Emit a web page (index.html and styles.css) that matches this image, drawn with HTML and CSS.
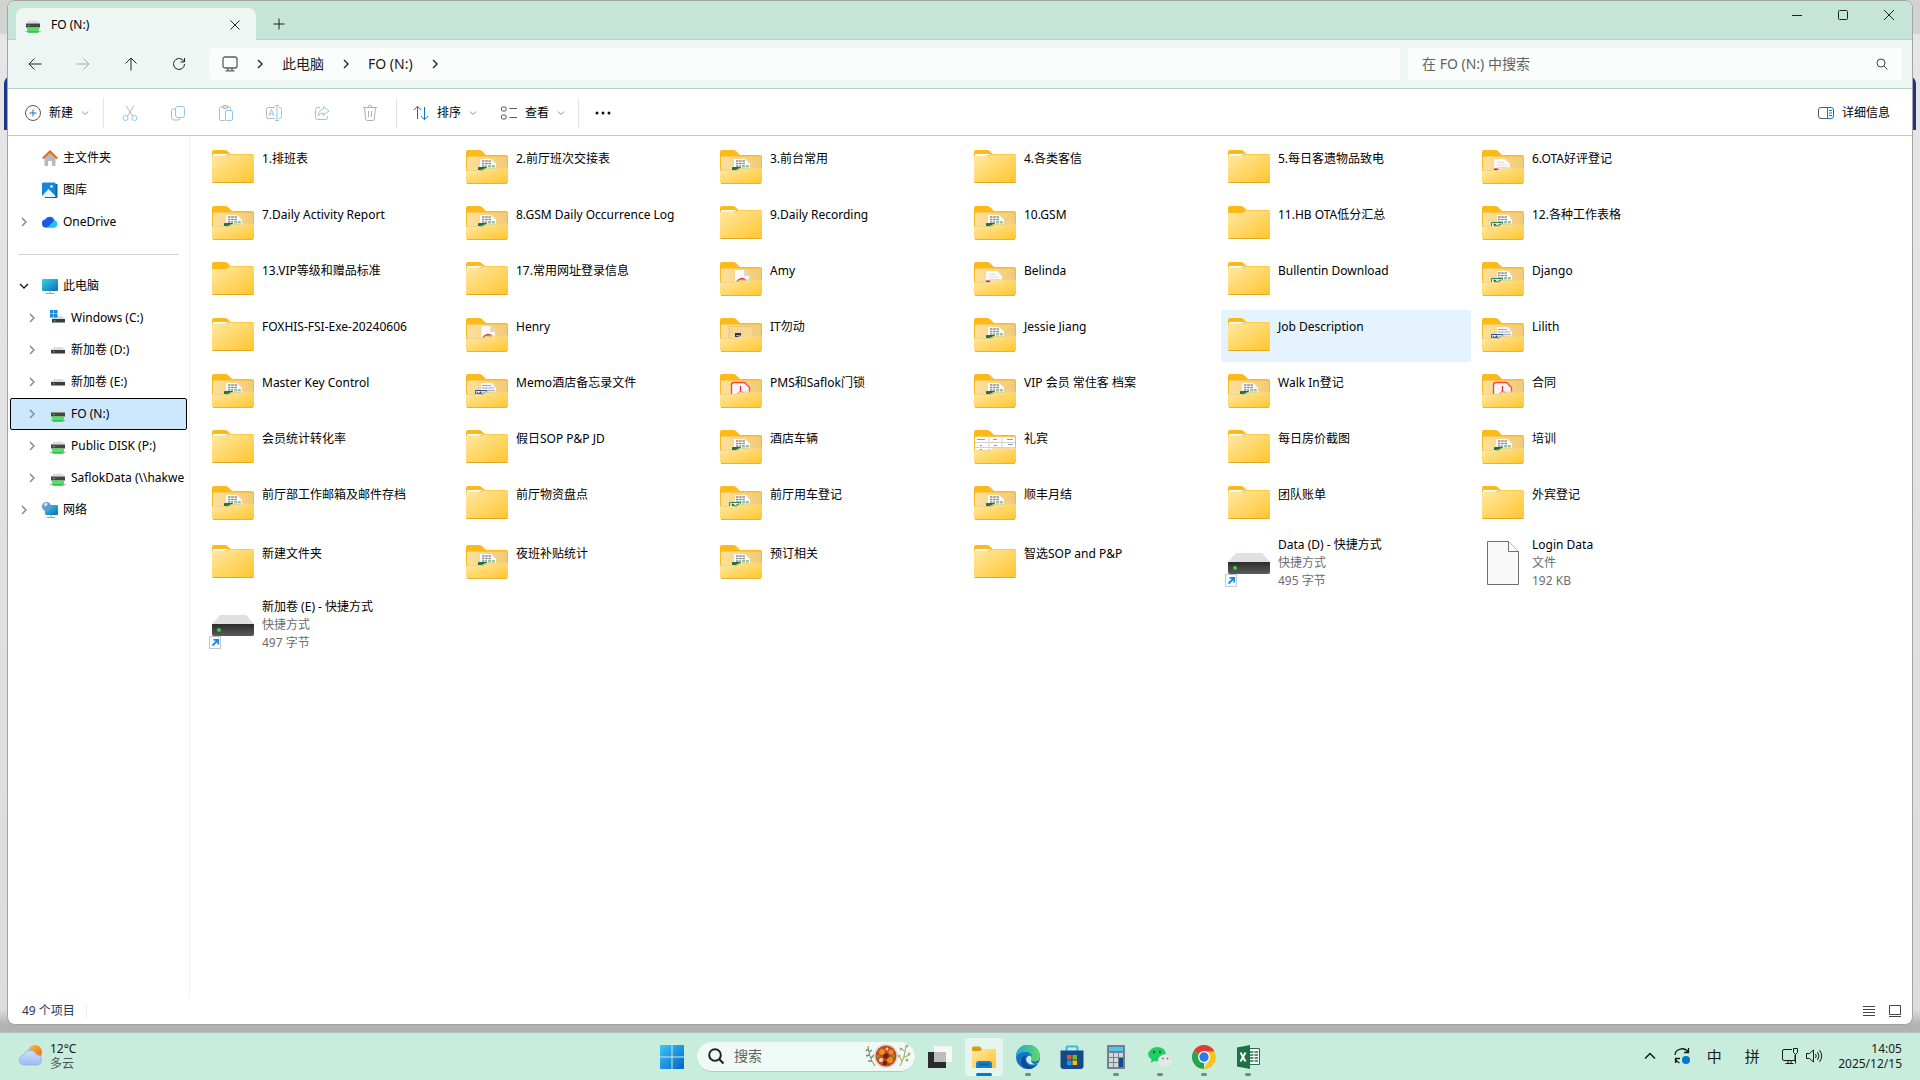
FILE: index.html
```
<!DOCTYPE html>
<html lang="zh-CN">
<head>
  <meta charset="UTF-8">
  <meta name="viewport" content="width=device-width, initial-scale=1.0">
  <title>FO (N:)</title>
  <link rel="stylesheet" href="styles.css">
</head>
<body>
  <!-- shared icons -->
  <svg class="defs" width="0" height="0" aria-hidden="true">
    <defs>
      <linearGradient id="gFolder" x1="0" y1="0" x2="1" y2="1">
        <stop offset="0" stop-color="#ffe9a4"/><stop offset="1" stop-color="#ffc52c"/>
      </linearGradient>
      <linearGradient id="gInside" x1="0" y1="0" x2="1" y2="0">
        <stop offset="0" stop-color="#fde09a"/><stop offset="1" stop-color="#f1ca78"/>
      </linearGradient>
      <linearGradient id="gDrive" x1="0" y1="0" x2="0" y2="1">
        <stop offset="0" stop-color="#2c2c2c"/><stop offset="1" stop-color="#5c5c5c"/>
      </linearGradient>
      <linearGradient id="gBlue" x1="0" y1="0" x2="1" y2="1">
        <stop offset="0" stop-color="#3fc4f6"/><stop offset="1" stop-color="#0067c5"/>
      </linearGradient>
      <linearGradient id="gScreen" x1="0" y1="0" x2="1" y2="1">
        <stop offset="0" stop-color="#35d6e4"/><stop offset="1" stop-color="#1268b8"/>
      </linearGradient>
      <linearGradient id="gEdge" x1="0" y1="0" x2="1" y2="0">
        <stop offset="0" stop-color="#1fa7e0"/><stop offset="1" stop-color="#5fdc5a"/>
      </linearGradient>
      <linearGradient id="gSun" x1="0" y1="0" x2="1" y2="1">
        <stop offset="0" stop-color="#f9c23c"/><stop offset="1" stop-color="#f0640a"/>
      </linearGradient>
      <linearGradient id="gCloud" x1="0" y1="0" x2="0" y2="1">
        <stop offset="0" stop-color="#cfe0fb"/><stop offset="1" stop-color="#9dbaf0"/>
      </linearGradient>
    </defs>

    <symbol id="folder" viewBox="0 0 48 48">
      <path d="M3 8q0-2 2-2h11q1.500 0 2.500 1l3 3H43q2 0 2 2v6H3z" fill="#fbb91a"/>
      <path d="M4 12V10h14l2 1z" fill="#fff"/>
      <path d="M3 12h14q1.500 0 2.500-.8T22 10.500H43.500Q45 10.500 45 12V37q0 2-2 2H5q-2 0-2-2z" fill="url(#gFolder)"/>
      <path d="M3.500 38.500h41" stroke="#e6a823"/>
      <path d="M5 11.500h11.500" stroke="#eef1f8"/>
    </symbol>
    <symbol id="folder-empty" viewBox="0 0 48 48">
      <path d="M3 8q0-2 2-2h11q1.500 0 2.500 1l3 3H43q2 0 2 2v6H3z" fill="#fbb91a"/>
      <path d="M3 13h13q1.500 0 2.500-1T22 10.500H43.500Q45 10.500 45 12V37q0 2-2 2H5q-2 0-2-2z" fill="url(#gFolder)"/>
      <path d="M3.500 38.500h41" stroke="#e6a823"/>
    </symbol>
    <symbol id="back" viewBox="0 0 48 48">
      <path d="M3 8q0-2 2-2h11q2 0 3 1l4 4H43q2 0 2 2v24H3z" fill="#fbb91a"/>
      <path d="M4 14q0-1.500 1.500-1.500H43q1 0 1 1V36H4z" fill="url(#gInside)"/>
    </symbol>
    <symbol id="front" viewBox="0 0 48 48">
      <path d="M3 27h14q2 0 3.500-1T24 24.500H45V37.500q0 2-2 2H5q-2 0-2-2z" fill="url(#gFolder)"/>
      <path d="M3 26.500h14q2 0 3.500-1T24 24H45" stroke="#f0d48a" fill="none"/>
      <path d="M4 39.500h40" stroke="#e9b23b"/>
    </symbol>
    <symbol id="excel" viewBox="0 0 48 48">
      <path d="M17 15h11l5 5v8H17z" fill="#fff"/>
      <path d="M19 17h9M19 19.500h9M19 22h5" stroke="#8a8a8a" stroke-width="1.500" stroke-dasharray="2.500 .7"/>
      <path d="M25 22h7M25 24.500h7" stroke="#8cc6a4" stroke-width="2" stroke-dasharray="3 .8"/>
      <path d="M15 24q0-1 1-1h8v5h-9z" fill="#1e7145"/>
    </symbol>
    <symbol id="excel-old" viewBox="0 0 48 48">
      <path d="M18 15h11l4 5v8H18z" fill="#fff"/>
      <path d="M19 17h9M19 19.500h9M19 22h5" stroke="#8a8a8a" stroke-width="1.500" stroke-dasharray="2.500 .7"/>
      <path d="M25 22h7M25 24.500h7" stroke="#8cc6a4" stroke-width="2" stroke-dasharray="3 .8"/>
      <path d="M12.500 22.500h11v6h-11z" fill="#e6f5ec" stroke="#2c8557"/>
      <path d="M15 24l3 3 4-3" stroke="#1e7145" stroke-width="2" fill="none"/>
    </symbol>
    <symbol id="word" viewBox="0 0 48 48">
      <path d="M18 15h11l4 5v8H18z" fill="#f7f8fb"/>
      <path d="M19 17.500h9M19 20h12M24 22.500h8M24 25h8" stroke="#a5a9b2"/>
      <path d="M12.500 22.500h11v6h-11z" fill="#dce6f5" stroke="#2b579a"/>
      <path d="M14 24.500l1.500 2.500 2-2.500 2 2.500 2-2.500" stroke="#2b579a" stroke-width="1.500" fill="none"/>
    </symbol>
    <symbol id="pdf" viewBox="0 0 48 48">
      <path d="M18 14h9l5 6v8H18z" fill="#fafafa"/>
      <path d="M27 14l5 6h-5z" fill="#d8d8d8"/>
      <path d="M20 26.500q4-6 9-1.500" stroke="#e0302b" stroke-width="2.500" fill="none"/>
    </symbol>
    <symbol id="acrobat" viewBox="0 0 48 48">
      <path d="M14.500 28V17q0-2.500 2.500-2.500h10.500l5 5V28z" fill="#f6f4f4" stroke="#f0473e" stroke-width="1.300"/>
      <path d="M23.500 18v5.500l-3.500 3M23.500 23.500l4 1.500" stroke="#e5252a" stroke-width="1.200" fill="none"/>
    </symbol>
    <symbol id="report" viewBox="0 0 48 48">
      <path d="M15 15h11l5 5v8H15z" fill="#fafafa"/>
      <path d="M18 18.500h7M18 21h10M18 23.500h10" stroke="#dcdcdc"/>
      <path d="M15 24.500h5l-2.500 3H15z" fill="#d3141c"/>
    </symbol>
    <symbol id="picture" viewBox="0 0 48 48">
      <path d="M12 14.500h24v14H12z" fill="#f6d793" stroke="#edc679"/>
      <path d="M18 21h6v4h-6z" fill="#283468"/>
      <path d="M19 23.500h4" stroke="#8ea0d0"/>
    </symbol>
    <symbol id="sheet" viewBox="0 0 48 48">
      <path d="M4 13h40v14H4z" fill="#fff"/>
      <path d="M4 18.500h40M4 23.500h40M18 13v14M31 13v14" stroke="#cfd0d4"/>
      <path d="M6 15.500h8M22 15.500h4M36 15.500h6M9 21.500h2M23 21.500h3M37 20.500h5M9 25.500h2" stroke="#999ba3"/>
    </symbol>
    <symbol id="drive-big" viewBox="0 0 48 48">
      <path d="M11 14h26l8 9H3z" fill="#dfe0e4"/>
      <path d="M3 23h42v10q0 2-1.500 2h-39Q3 35 3 33z" fill="url(#gDrive)"/>
      <circle cx="10" cy="29" r="2" fill="#2fd53a"/>
      <path d="M.5 35.500h11v12H.5z" fill="#fff" stroke="#b9c7dc"/>
      <path d="M3.500 44.500l5-5M4.500 38.800h4.700v4.700" stroke="#1b87dc" stroke-width="1.800" fill="none"/>
    </symbol>
    <symbol id="file" viewBox="0 0 48 48">
      <path d="M8.500 2.500h21l10 10v33h-31z" fill="#f9f9f9" stroke="#6e6e6e"/>
      <path d="M29.500 2.500v10h10" fill="#fff" stroke="#6e6e6e"/>
    </symbol>

    <symbol id="drive" viewBox="0 0 16 16">
      <path d="M4 5h8l3 3H1z" fill="#dcdde1"/>
      <path d="M1 8h14v3.500H1z" fill="#3b3b3b"/>
      <path d="M3 9.800h1.500" stroke="#2fe23a"/>
    </symbol>
    <symbol id="netdrive" viewBox="0 0 16 16">
      <path d="M4 3.500h8l3 3H1z" fill="#dcdde1"/>
      <path d="M1 6.500h14v4H1z" fill="#454545"/>
      <path d="M3 8.500h1.500" stroke="#2fe23a"/>
      <path d="M2 10.500h12v5H2z" fill="#55e065"/>
      <path d="M3 15h10" stroke="#1fa03c"/>
      <path d="M0 14.500h2M14 14.500h2" stroke="#b9bcc0"/>
    </symbol>
    <symbol id="chev" viewBox="0 0 16 16"><path d="M6 4l4 4-4 4" fill="none" stroke="currentColor" stroke-width="1.500"/></symbol>
    <symbol id="down" viewBox="0 0 8 8"><path d="M1 2.500l3 3 3-3" fill="none" stroke="#8a8a8a"/></symbol>
  </svg>

  <main class="window">
    <header class="titlebar">
      <div class="tab">
        <svg class="i16"><use href="#netdrive"/></svg>
        <span class="tab-name">FO (N:)</span>
        <button class="icon-btn" aria-label="关闭标签页"><svg width="10" height="10" viewBox="0 0 10 10"><path d="M.5.5l9 9M9.500.5l-9 9"/></svg></button>
      </div>
      <button class="icon-btn new-tab" aria-label="新建标签页"><svg width="12" height="12" viewBox="0 0 12 12"><path d="M6 .5v11M.5 6h11"/></svg></button>
      <div class="caption">
        <button aria-label="最小化"><svg width="10" height="10" viewBox="0 0 10 10"><path d="M0 5.500h10"/></svg></button>
        <button aria-label="最大化"><svg width="10" height="10" viewBox="0 0 10 10"><rect x=".5" y=".5" width="9" height="9" rx="1"/></svg></button>
        <button aria-label="关闭"><svg width="10" height="10" viewBox="0 0 10 10"><path d="M0 0l10 10M10 0L0 10"/></svg></button>
      </div>
    </header>

    <div class="navbar">
      <div class="nav-buttons">
        <button class="icon-btn" aria-label="后退"><svg width="14" height="14" viewBox="0 0 14 14"><path d="M13.500 7H1M6.500 1.500L1 7l5.500 5.500"/></svg></button>
        <button class="icon-btn" aria-label="前进" disabled><svg width="14" height="14" viewBox="0 0 14 14"><path d="M.5 7H13M7.500 1.500L13 7l-5.500 5.500"/></svg></button>
        <button class="icon-btn" aria-label="向上"><svg width="14" height="14" viewBox="0 0 14 14"><path d="M7 13.500V1M1.500 6.500L7 1l5.500 5.500"/></svg></button>
        <button class="icon-btn" aria-label="刷新"><svg width="14" height="14" viewBox="0 0 14 14"><path d="M12.500 7A5.500 5.500 0 1 1 11 3.200L12.500 5M12.500 1v4h-4"/></svg></button>
      </div>
      <nav class="address">
        <svg width="16" height="16" viewBox="0 0 16 16"><g fill="none" stroke="#5c5c5c" stroke-width="1.300"><rect x="1" y="1" width="14" height="11" rx="2"/><path d="M6 12v2.500M10 12v2.500M3.500 14.800h9"/></g></svg>
        <svg class="i16"><use href="#chev"/></svg>
        <a href="#">此电脑</a>
        <svg class="i16"><use href="#chev"/></svg>
        <a href="#">FO (N:)</a>
        <svg class="i16"><use href="#chev"/></svg>
      </nav>
      <label class="search">
        <input type="text" placeholder="在 FO (N:) 中搜索" aria-label="搜索">
        <svg width="12" height="12" viewBox="0 0 12 12"><path d="M8 8l3.500 3.500" /><circle cx="5" cy="5" r="4"/></svg>
      </label>
    </div>

    <div class="commands">
      <button class="cmd new"><svg width="16" height="16" viewBox="0 0 16 16"><circle cx="8" cy="8" r="7.500" stroke="#5a5a5a"/><path d="M8 4.500v7M4.500 8h7" stroke="#0078d4"/></svg><span>新建</span><svg class="i8"><use href="#down"/></svg></button>
      <span class="sep"></span>
      <div class="tools">
        <button aria-label="剪切" disabled><svg width="16" height="16" viewBox="0 0 16 16"><path d="M4 .5l6.500 10.500M12 .5L5.500 11" stroke="#b8b8b8"/><circle cx="3.500" cy="13" r="2.500" stroke="#8fc7ee"/><circle cx="12.500" cy="13" r="2.500" stroke="#8fc7ee"/></svg></button>
        <button aria-label="复制" disabled><svg width="16" height="16" viewBox="0 0 16 16"><path d="M5.500 4H3Q1.500 4 1.500 5.500v7Q1.500 15 4 15h4q2 0 2-2" stroke="#b8b8b8"/><rect x="5.500" y="1.500" width="9" height="11" rx="2" stroke="#8fc7ee"/></svg></button>
        <button aria-label="粘贴" disabled><svg width="16" height="16" viewBox="0 0 16 16"><path d="M7 15.500H3q-1.500 0-1.500-1.500V3.500Q1.500 2 3 2h8q1.500 0 1.500 1.500V5M4.500 2q0-1.500 1.500-1.500h2.500q1.500 0 1.500 1.500t-1.500 1.500H6Q4.500 3.500 4.500 2" stroke="#b8b8b8"/><rect x="7.500" y="5.500" width="7" height="10" rx="1.500" stroke="#8fc7ee"/></svg></button>
        <button aria-label="重命名" disabled><svg width="16" height="16" viewBox="0 0 16 16"><path d="M9 2.500H2.500Q.5 2.500.5 4.500v7q0 2 2 2H9M13 2.500q2.500 0 2.500 2v7q0 2-2.500 2" stroke="#b8b8b8"/><path d="M3 11l2.500-6.500L8 11M4 9h3M11 .5v15M9 .5h4M9 15.500h4" stroke="#8fc7ee"/></svg></button>
        <button aria-label="共享" disabled><svg width="16" height="16" viewBox="0 0 16 16"><path d="M6 2.500H3.500Q1.500 2.500 1.500 4.500v8q0 2 2 2h8q2 0 2-2V11" stroke="#b8b8b8"/><path d="M9.500 1.500L15 6 9.500 10.500V8Q6 8 4 11q.5-6 5.500-7z" stroke="#8fc7ee"/></svg></button>
        <button aria-label="删除" disabled><svg width="16" height="16" viewBox="0 0 16 16"><path d="M1 2.500h14M6 2.500q0-2 2-2t2 2M2.500 2.500l1.200 11.500q.2 1.500 1.500 1.500h5.600q1.300 0 1.500-1.500L13.500 2.500M6.500 6v6M9.500 6v6" stroke="#b0b0b0"/></svg></button>
      </div>
      <span class="sep"></span>
      <button class="cmd"><svg width="16" height="16" viewBox="0 0 16 16"><path d="M4.500 14V1.500M.8 5l3.700-3.700L8.200 5" stroke="#5a5a5a"/><path d="M11.500 2v12.500M7.800 11l3.700 3.700 3.700-3.700" stroke="#0078d4"/></svg><span>排序</span><svg class="i8"><use href="#down"/></svg></button>
      <button class="cmd view"><svg width="16" height="16" viewBox="0 0 16 16"><g stroke="#5a5a5a"><rect x=".5" y="2" width="4.500" height="4" rx="1"/><rect x=".5" y="10" width="4.500" height="4" rx="1"/><path d="M8.500 3.500h7.500M8.500 12.500h7.500"/></g></svg><span>查看</span><svg class="i8"><use href="#down"/></svg></button>
      <span class="sep"></span>
      <button class="more" aria-label="更多"><svg width="16" height="4" viewBox="0 0 16 4"><g fill="#111" stroke="none"><circle cx="2" cy="2" r="1.500"/><circle cx="8" cy="2" r="1.500"/><circle cx="14" cy="2" r="1.500"/></g></svg></button>
      <button class="cmd details"><svg width="16" height="16" viewBox="0 0 16 16"><path d="M9.500 2.500H3Q.5 2.500.5 5v6q0 2.500 2.500 2.500h6.500" stroke="#5a5a5a"/><path d="M9.500 2.500H13q2.500 0 2.500 2.500v6q0 2.500-2.500 2.500H9.500zM11 5.500h3M11 8h3M11 10.500h3" stroke="#0078d4"/></svg><span>详细信息</span></button>
    </div>

    <div class="content">
      <aside class="sidebar">
        <ul>
          <li><button class="node"><span class="i16"></span><svg class="i16" viewBox="0 0 16 16"><path d="M2.500 7L8 2l5.500 5v8q0 1-1 1H10v-5H6v5H3.500q-1 0-1-1z" fill="#b9b9b9"/><path d="M.8 8.500L8 1.500l7.200 7" stroke="#e26a1c" stroke-width="2" fill="none"/></svg>主文件夹</button></li>
          <li><button class="node"><span class="i16"></span><svg class="i16" viewBox="0 0 16 16"><path d="M3 2h12.500v13q0 1-1 1H3z" fill="#1462ae"/><path d="M0 1.500Q0 .5 1 .5h11.500q1 0 1 1V14H0z" fill="#1687d9"/><path d="M0 14l6.500-7 7 7q0 1-1 1H1q-1 0-1-1z" fill="#eaf5fd"/><circle cx="9.500" cy="4.500" r="1.200" fill="#fff"/></svg>图库</button></li>
          <li><button class="node"><svg class="i16"><use href="#chev"/></svg><svg class="i16" viewBox="0 0 16 16"><path d="M4 13.500a4 4 0 0 1-.8-7.900 5 5 0 0 1 9.300.9A3.600 3.600 0 0 1 12.500 13.500z" fill="#1490f0"/><path d="M3.200 5.600a5 5 0 0 1 9 .7L5 13.500H4a4 4 0 0 1-.8-7.900z" fill="#1b5be0"/><path d="M12.500 6.500A3.600 3.600 0 0 1 12.500 13.500H6z" fill="#23c0fb"/></svg>OneDrive</button></li>
        </ul>
        <hr>
        <ul>
          <li><button class="node"><svg class="i16 open"><use href="#chev"/></svg><svg class="i16" viewBox="0 0 16 16"><rect y="1" width="16" height="12" rx="1" fill="url(#gScreen)"/><path d="M8 13v2M4 15.500h8" stroke="#9aa0a6"/></svg>此电脑</button></li>
          <li><button class="node sub"><svg class="i16"><use href="#chev"/></svg><svg class="i16" viewBox="0 0 16 16"><path d="M3 6h9l3 3H2z" fill="#dcdde1"/><path d="M2 9h13v3.500H2z" fill="#3b3b3b"/><path d="M4 10.800h1.500" stroke="#2fe23a"/><path d="M0 0h3.500v3.500H0zM4 0h3.500v3.500H4zM0 4h3.500v3.500H0zM4 4h3.500v3.500H4z" fill="#1589dc"/></svg>Windows (C:)</button></li>
          <li><button class="node sub"><svg class="i16"><use href="#chev"/></svg><svg class="i16"><use href="#drive"/></svg>新加卷 (D:)</button></li>
          <li><button class="node sub"><svg class="i16"><use href="#chev"/></svg><svg class="i16"><use href="#drive"/></svg>新加卷 (E:)</button></li>
          <li><button class="node sub active"><svg class="i16"><use href="#chev"/></svg><svg class="i16"><use href="#netdrive"/></svg>FO (N:)</button></li>
          <li><button class="node sub"><svg class="i16"><use href="#chev"/></svg><svg class="i16"><use href="#netdrive"/></svg>Public DISK (P:)</button></li>
          <li><button class="node sub"><svg class="i16"><use href="#chev"/></svg><svg class="i16"><use href="#netdrive"/></svg>SaflokData (\\hakwe</button></li>
          <li><button class="node"><svg class="i16"><use href="#chev"/></svg><svg class="i16" viewBox="0 0 16 16"><rect x="3" y="3" width="13" height="10" rx="1" fill="url(#gScreen)"/><path d="M9 13v2M5 15.500h8" stroke="#9aa0a6"/><circle cx="4.500" cy="4.500" r="4.500" fill="#5f9fc9"/><path d="M2 2q2-2 4 0L3 5z" fill="#d6ecf8"/></svg>网络</button></li>
        </ul>
      </aside>
      <ul class="files" id="files"></ul>
    </div>

    <footer class="status">
      <span>49 个项目</span>
      <div class="modes">
        <button aria-label="详细信息视图"><svg width="12" height="12" viewBox="0 0 12 12"><path d="M0 1.500h12M0 4.500h12M0 7.500h12M0 10.500h12"/></svg></button>
        <button aria-label="大图标视图"><svg width="12" height="12" viewBox="0 0 12 12"><path d="M.5.500h11v9H.5zM0 11.500h12"/></svg></button>
      </div>
    </footer>
  </main>

  <footer class="taskbar">
    <button class="weather">
      <svg width="26" height="24" viewBox="0 0 26 24"><circle cx="17" cy="8" r="7" fill="url(#gSun)"/><path d="M6 21a5 5 0 0 1-.5-9.900 7 7 0 0 1 13-.5A5.300 5.300 0 0 1 19.500 21z" fill="url(#gCloud)" stroke="#8fadf0" stroke-width=".8"/></svg>
      <span>12°C<small>多云</small></span>
    </button>

    <div class="apps">
      <button class="app" aria-label="开始"><svg width="24" height="24" viewBox="0 0 24 24"><path d="M0 1q0-1 1-1h10.500v11.500H0zM12.500 0H23q1 0 1 1v10.500H12.500zM0 12.500h11.500V24H1q-1 0-1-1zM12.500 12.500H24V23q0 1-1 1H12.500z" fill="url(#gBlue)"/></svg></button>
      <label class="task-search">
        <svg width="16" height="16" viewBox="0 0 16 16"><circle cx="7" cy="7" r="5.800"/><path d="M11 11l4.500 4.500"/></svg>
        <input type="text" placeholder="搜索" aria-label="搜索 Windows">
        <svg width="46" height="26" viewBox="0 0 46 26">
          <path d="M3 3q1 12 7 20" stroke="#7b8a6c" fill="none"/><path d="M3 6l-2 2M4 9l3-2M4 12l-3 1M6 15l3-3M7 18l-4 0" stroke="#7b8a6c" stroke-width="1.500"/>
          <path d="M35 23q5-9 6-20M38 15l6-3M37 18l-3-5M40 9l-3-3" stroke="#a3a65a" fill="none"/><g fill="#b1b266"><circle cx="42" cy="3" r="1.500"/><circle cx="36" cy="6" r="1.500"/><circle cx="44" cy="11" r="1.500"/><circle cx="34" cy="13" r="1.500"/><circle cx="42" cy="17" r="1.500"/></g>
          <circle cx="21" cy="13" r="12" fill="#d9dadd"/><circle cx="21" cy="13" r="10.500" fill="#c44a20"/>
          <g fill="#f08a24"><circle cx="17" cy="9" r="3"/><circle cx="25" cy="17" r="3"/><circle cx="26" cy="9" r="2.500"/></g><g fill="#6e2412"><circle cx="21" cy="13" r="2.800"/><circle cx="20" cy="20" r="2.200"/></g><g fill="#efc9a2"><circle cx="16" cy="17" r="2.200"/><circle cx="22" cy="6" r="1.500"/></g><g fill="#5fae2e"><circle cx="28" cy="13" r="1.500"/><circle cx="13" cy="13" r="1.500"/></g>
        </svg>
      </label>
      <button class="app" aria-label="任务视图"><svg width="24" height="24" viewBox="0 0 24 24"><path d="M0 7h18v16H0z" fill="#2b2b2b"/><path d="M6 1h18v16H6z" fill="#f6f6f6"/><path d="M6 7h12v10H6z" fill="#bdbdbd"/></svg></button>
      <button class="app current" aria-label="文件资源管理器"><svg width="24" height="24" viewBox="0 0 24 24"><path d="M0 3q0-1.500 1.500-1.500H8L10 4h12.500Q24 4 24 5.500V10H0z" fill="#dd9b0c"/><path d="M0 6h8l2-2h12.500Q24 4 24 5.500V23H0z" fill="url(#gFolder)"/><path d="M4 23v-4q0-3 3-3h10q3 0 3 3v4z" fill="#1480d2"/><path d="M7 19.500h10" stroke="#0b5fa8" stroke-width="2"/></svg></button>
      <button class="app running" aria-label="Edge"><svg width="24" height="24" viewBox="0 0 24 24"><circle cx="12" cy="12" r="12" fill="#1272c4"/><path d="M0 12A12 12 0 0 1 24 11q0 5-5 5.500-4 0-4-2 1-1 1-3Q15 7 10 7 3 7 0 12z" fill="url(#gEdge)"/><path d="M9 13q0 7 7 8.500 3 0 5.500-2.500Q18 24 12 24 5 23 5 16q0-4 5-6-1 1-1 3z" fill="#0d4a9c"/><path d="M11 12q-2 3 1 6 4 3 10 0l-.5 1Q15 20 15 14.500q1-1 .5-2.500-1-3-4.500 0z" fill="#cfeee2"/></svg></button>
      <button class="app" aria-label="Microsoft Store"><svg width="24" height="24" viewBox="0 0 24 24"><path d="M6.500 6V2.500q0-1 1-1h9q1 0 1 1V6" stroke="#35b9ee" stroke-width="2" fill="none"/><path d="M.5 5.500h23V21q0 3-3 3h-17q-3 0-3-3z" fill="#15498a"/><path d="M7 10h4.500v4.500H7z" fill="#f25022"/><path d="M12.500 10H17v4.500h-4.500z" fill="#7fba00"/><path d="M7 15.500h4.500V20H7z" fill="#00a4ef"/><path d="M12.500 15.500H17V20h-4.500z" fill="#ffb900"/></svg></button>
      <button class="app running" aria-label="计算器"><svg width="24" height="24" viewBox="0 0 24 24"><rect x="3" width="18" height="24" rx="1" fill="#76808c"/><path d="M5 2h14v4H5z" fill="#45c8f2"/><path d="M5 8h4v4H5zM10 8h4v4h-4zM15 8h4v4h-4zM5 13h4v4H5zM10 13h4v4h-4zM5 18h4v4H5zM10 18h4v4h-4z" fill="#d4d9de"/><path d="M15 13h4v9h-4z" fill="#0f4c92"/></svg></button>
      <button class="app running" aria-label="微信"><svg width="24" height="24" viewBox="0 0 24 24"><path d="M9 2q8 0 9 7-7 1-8 7.500l-4-.5-3 2 .5-3.500Q0 12 0 9.500 1 3 9 2z" fill="#1fcf63"/><ellipse cx="17" cy="15.500" rx="7" ry="6" fill="#e6e8e8"/><path d="M19 20l3.500 2-.5-4z" fill="#e6e8e8"/><g fill="#0d6b35"><circle cx="6" cy="7" r="1.200"/><circle cx="12" cy="7" r="1.200"/></g><g fill="#808585"><circle cx="15" cy="13.500" r="1"/><circle cx="19.500" cy="13.500" r="1"/></g></svg></button>
      <button class="app running" aria-label="Chrome"><svg width="24" height="24" viewBox="0 0 24 24"><path d="M12 12L1.600 6A12 12 0 0 1 22.400 6z" fill="#e33b2e"/><path d="M12 12v12A12 12 0 0 1 1.600 6z" fill="#2ba24c"/><path d="M12 6.500h10.500A12 12 0 0 1 12 24l5-9z" fill="#fcc31e"/><circle cx="12" cy="12" r="6" fill="#fff"/><circle cx="12" cy="12" r="4.700" fill="#2f78ea"/></svg></button>
      <button class="app running" aria-label="Excel"><svg width="24" height="24" viewBox="0 0 24 24"><path d="M12 3.500h11.500v16H12z" fill="#fff" stroke="#217346"/><path d="M14 7h3.500M14 10h3.500M14 13h3.500M14 16h3.500M18.500 7H22M18.500 10H22M18.500 13H22M18.500 16H22" stroke="#217346" stroke-width="1.500"/><path d="M1 2.500L14 0v24L1 21.500z" fill="#1e7145"/><path d="M4.500 7.500l5 9M9.500 7.500l-5 9" stroke="#fff" stroke-width="2"/></svg></button>
    </div>

    <div class="tray">
      <button aria-label="显示隐藏的图标"><svg width="12" height="8" viewBox="0 0 12 8"><path d="M1 6.500l5-5 5 5" stroke-width="1.500"/></svg></button>
      <button aria-label="更新"><svg width="18" height="18" viewBox="0 0 18 18"><path d="M2 8a7 6.500 0 0 1 13-3M15.500 1v4.500H11M2.500 16v-4.500H7M2.500 12q1.500 3 4 4" stroke-width="1.300"/><circle cx="13" cy="13" r="4" fill="#0078d4" stroke="none"/></svg></button>
      <button class="ime">中</button>
      <button class="ime">拼</button>
      <button class="sound" aria-label="网络和音量">
        <svg width="18" height="18" viewBox="0 0 18 18"><path d="M11 2.500H3q-1.500 0-1.500 1.500v8q0 1.500 1.500 1.500h11V8M7 13.500v3M10 13.500v3M4.500 16.500h8M12.500 1.500h4v4l-2 2-2-2zM14.500 7v9.500"/></svg>
        <svg width="18" height="18" viewBox="0 0 18 18"><path d="M1.500 6.500h3L8.500 3v12l-4-3.500h-3zM10.500 7q1.500 2 0 4M12.500 5q3 4 0 8M14.500 3q4.500 6 0 12"/></svg>
      </button>
      <button class="clock"><span>14:05</span><span>2025/12/15</span></button>
    </div>
  </footer>

  <script>
// [name, icon, type, size]
const files = [
  ['1.排班表', 'plain'], ['2.前厅班次交接表', 'excel'], ['3.前台常用', 'excel'], ['4.各类客信', 'plain'], ['5.每日客遗物品致电', 'plain'], ['6.OTA好评登记', 'report'],
  ['7.Daily Activity Report', 'excel'], ['8.GSM Daily Occurrence Log', 'excel'], ['9.Daily Recording', 'plain'], ['10.GSM', 'excel'], ['11.HB OTA低分汇总', 'empty'], ['12.各种工作表格', 'excel-old'],
  ['13.VIP等级和赠品标准', 'empty'], ['17.常用网址登录信息', 'plain'], ['Amy', 'pdf'], ['Belinda', 'report'], ['Bullentin Download', 'plain'], ['Django', 'excel-old'],
  ['FOXHIS-FSI-Exe-20240606', 'plain'], ['Henry', 'pdf'], ['IT勿动', 'picture'], ['Jessie Jiang', 'excel'], ['Job Description', 'plain'], ['Lilith', 'word'],
  ['Master Key Control', 'excel'], ['Memo酒店备忘录文件', 'word'], ['PMS和Saflok门锁', 'acrobat'], ['VIP 会员 常住客 档案', 'excel'], ['Walk In登记', 'excel'], ['合同', 'acrobat'],
  ['会员统计转化率', 'plain'], ['假日SOP P&P JD', 'plain'], ['酒店车辆', 'excel'], ['礼宾', 'sheet'], ['每日房价截图', 'plain'], ['培训', 'excel'],
  ['前厅部工作邮箱及邮件存档', 'excel'], ['前厅物资盘点', 'plain'], ['前厅用车登记', 'excel-old'], ['顺丰月结', 'excel'], ['团队账单', 'plain'], ['外宾登记', 'plain'],
  ['新建文件夹', 'plain'], ['夜班补贴统计', 'excel'], ['预订相关', 'excel'], ['智选SOP and P&P', 'plain'], ['Data (D) - 快捷方式', 'drive-big', '快捷方式', '495 字节'], ['Login Data', 'file', '文件', '192 KB'],
  ['新加卷 (E) - 快捷方式', 'drive-big', '快捷方式', '497 字节']
];

function iconLayers(icon) {
  if (icon === 'plain') return ['folder'];
  if (icon === 'empty') return ['folder-empty'];
  if (icon === 'drive-big' || icon === 'file') return [icon];
  return ['back', icon, 'front'];
}

const list = document.getElementById('files');
files.forEach(([name, icon, type, size]) => {
  const li = document.createElement('li');
  const layers = iconLayers(icon).map(id => `<use href="#${id}"/>`).join('');
  const cls = name === 'Job Description' ? 'file hover' : 'file';
  const meta = type ? `<span class="meta">${type}</span><span class="meta">${size}</span>` : '';
  li.innerHTML = `<button class="${cls}"><svg class="i48">${layers}</svg><span class="label"><span>${name.replace(/&/g, '&amp;')}</span>${meta}</span></button>`;
  list.appendChild(li);
});
  </script>
</body>
</html>
```
FILE: styles.css
```
* {
  box-sizing: border-box;
}

body {
  margin: 0;
  height: 100vh;
  display: flex;
  flex-direction: column;
  position: relative;
  overflow: hidden;
  font-family: "Noto Sans", "Noto Sans CJK SC", sans-serif;
  font-size: 12px;
  line-height: 18px;
  color: #000;
  background: linear-gradient(#d2d2d2 34px, #e6e6e6 34px, #dcdcdc calc(100% - 70px), #b2b2b2 calc(100% - 56px));
}

/* window sitting behind this one */
body::before {
  content: "";
  position: absolute;
  z-index: -1;
  top: 76px;
  left: 4px;
  right: 4px;
  height: 54px;
  border-radius: 8px 8px 0 0;
  background: #1f3684;
}

button {
  display: flex;
  align-items: center;
  padding: 0;
  border: 0;
  background: none;
  font: inherit;
  color: inherit;
  text-align: left;
  white-space: nowrap;
}

input {
  flex: 1;
  min-width: 0;
  padding: 0;
  border: 0;
  outline: 0;
  background: none;
  font: inherit;
}

ul {
  margin: 0;
  padding: 0;
  list-style: none;
}

svg {
  flex: none;
  fill: none;
}

.defs {
  position: absolute;
}

.i8 {
  width: 8px;
  height: 8px;
}

.i16 {
  flex: none;
  width: 16px;
  height: 16px;
}

.i48 {
  width: 48px;
  height: 48px;
}

.window {
  flex: 1;
  min-height: 0;
  display: flex;
  flex-direction: column;
  margin: 0 7px 7px;
  border: 1px solid #a3a3a3;
  border-radius: 8px;
  background: #fff;
  overflow: hidden;
}

/* title bar */
.titlebar {
  display: flex;
  height: 39px;
  padding-left: 8px;
  background: #c5e5d8;
  border-bottom: 1px solid #b5d5c9;
}

.tab {
  display: flex;
  align-items: center;
  width: 240px;
  height: 32px;
  margin-top: 7px;
  padding: 1px 5px 0 9px;
  border-radius: 8px 8px 0 0;
  background: #edf6f2;
}

.tab-name {
  flex: 1;
  margin-left: 10px;
}

.icon-btn {
  justify-content: center;
  width: 32px;
  height: 32px;
}

.icon-btn svg, .caption svg {
  stroke: #222;
}

.icon-btn:disabled svg {
  stroke: #a3aaa7;
}

.new-tab {
  margin: 7px 0 0 7px;
}

.caption {
  display: flex;
  margin-left: auto;
}

.caption button {
  justify-content: center;
  width: 46px;
  height: 28px;
}

/* navigation */
.navbar {
  display: flex;
  align-items: center;
  gap: 8px;
  height: 49px;
  padding: 0 10px 0 11px;
  background: #edf6f2;
  border-bottom: 1px solid #b2d2c6;
}

.nav-buttons {
  display: flex;
  gap: 16px;
  width: 182px;
}

.address, .search {
  display: flex;
  align-items: center;
  height: 32px;
  border-radius: 4px;
  background: #fbfdfc;
}

.address {
  flex: 5;
  gap: 14px;
  padding: 0 13px;
  color: #333;
}

.address a {
  font-size: 14px;
  color: #1b1b1b;
  text-decoration: none;
}

.search {
  flex: 2;
  padding: 0 14px;
  font-size: 14px;
}

.search svg {
  stroke: #444;
}

.search input::placeholder, .task-search input::placeholder {
  color: #5f6361;
  opacity: 1;
}

/* command bar */
.commands {
  display: flex;
  align-items: center;
  height: 47px;
  padding: 2px 22px 0 17px;
  border-bottom: 1px solid #b2d2c6;
}

.cmd {
  gap: 8px;
  height: 32px;
}

.new {
  margin-right: 14px;
}

.view {
  margin-left: 24px;
  margin-right: 13px;
}

.sep {
  width: 1px;
  height: 30px;
  background: #e5e5e5;
}

.tools {
  display: flex;
  margin: 0 2px;
}

.tools button {
  justify-content: center;
  width: 48px;
  height: 32px;
}

.tools + .sep {
  margin-right: 16px;
}

.more {
  margin-left: 16px;
  height: 32px;
}

.details {
  margin-left: auto;
}

/* main area */
.content {
  flex: 1;
  min-height: 0;
  display: flex;
}

.sidebar {
  width: 182px;
  padding: 6px 2px 0;
  border-right: 1px solid #f0f0f0;
}

.sidebar hr {
  height: 1px;
  margin: 16px 8px 15px;
  border: 0;
  background: #d0d0d0;
}

.node {
  gap: 5px;
  width: 100%;
  height: 32px;
  padding-left: 5px;
  border: 1px solid transparent;
  border-radius: 2px;
  overflow: hidden;
}

.node .i16:first-child {
  margin-right: 5px;
  color: #8a8a8a;
}

.node .open:first-child {
  color: #222;
  transform: rotate(90deg);
}

.sub {
  padding-left: 13px;
}

.active {
  background: #cce8ff;
  border-color: #000;
}

.files {
  flex: 1;
  display: grid;
  grid-template-columns: repeat(auto-fill, 250px);
  align-content: start;
  gap: 4px;
  padding: 6px 15px;
}

.files li {
  display: flex;
}

.file {
  gap: 5px;
  width: 100%;
  padding: 2px 4px;
  border-radius: 2px;
}

.hover {
  background: #e5f3ff;
}

.label {
  display: flex;
  flex-direction: column;
  min-height: 36px;
}

.meta {
  color: #6d6d6d;
}

/* status bar */
.status {
  display: flex;
  align-items: center;
  justify-content: space-between;
  height: 26px;
  padding: 0 11px 0 14px;
  color: #1e395b;
}

.status > span {
  padding-right: 11px;
  border-right: 1px solid #ececec;
  line-height: 14px;
}

.modes {
  display: flex;
  gap: 14px;
}

.modes svg {
  stroke: #444;
}

/* taskbar */
.taskbar {
  display: grid;
  grid-template-columns: 1fr auto 1fr;
  align-items: center;
  height: 48px;
  padding: 0 18px;
  background: #c8eddd;
  border-top: 1px solid #b0c4bb;
  color: #1a1a1a;
}

.weather {
  gap: 6px;
  padding-bottom: 2px;
  line-height: 15px;
}

.weather small {
  display: block;
  font-size: 12px;
  color: #4c5a54;
}

.apps {
  display: flex;
  align-items: center;
  gap: 6px;
}

.app {
  position: relative;
  justify-content: center;
  width: 38px;
  height: 38px;
  border-radius: 4px;
}

.current {
  background: #e6f6ef;
}

.current::after, .running::after {
  content: "";
  position: absolute;
  bottom: 0;
  left: 16px;
  width: 6px;
  height: 3px;
  border-radius: 2px;
  background: #738a80;
}

.current::after {
  left: 11px;
  width: 16px;
  background: #0078d4;
}

.task-search {
  display: flex;
  align-items: center;
  gap: 10px;
  width: 218px;
  height: 30px;
  padding: 0 4px 0 11px;
  border-radius: 15px;
  background: #eff9f5;
  border-bottom: 1px solid #b0cdc1;
  font-size: 14px;
}

.task-search svg:first-child {
  stroke: #222;
  stroke-width: 2;
}

.tray {
  display: flex;
  align-items: center;
  justify-content: flex-end;
  padding-bottom: 2px;
}

.tray svg {
  stroke: #1a1a1a;
}

.tray button {
  justify-content: center;
  width: 32px;
  height: 38px;
}

.tray .ime {
  font-size: 15px;
}

.tray .ime + .ime {
  margin-left: 6px;
}

.tray .sound {
  gap: 6px;
  width: 48px;
  margin: 0 12px 0 10px;
}

.tray .clock {
  flex-direction: column;
  align-items: flex-end;
  width: auto;
  line-height: 15px;
}
```
